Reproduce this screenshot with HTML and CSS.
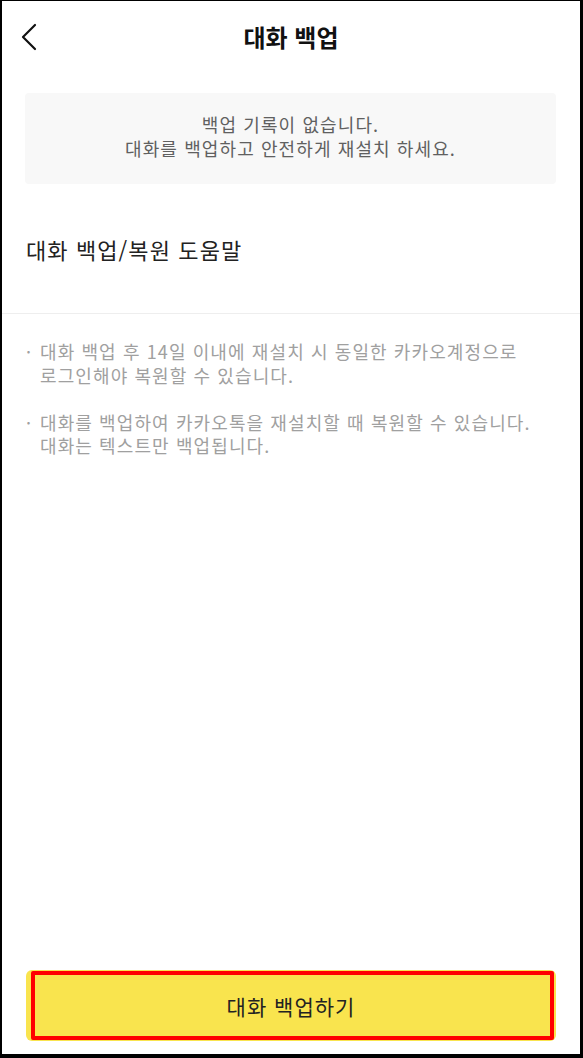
FILE: index.html
```html
<!DOCTYPE html>
<html lang="ko">
<head>
<meta charset="utf-8">
<title>대화 백업</title>
<link rel="stylesheet" href="styles.css">
</head>
<body>
<div class="frame">
  <header class="header">
    <button class="back" aria-label="뒤로">
      <svg width="18" height="28" viewBox="0 0 18 28"><path d="M15 2 L3 14 L15 26" fill="none" stroke="#111" stroke-width="2.2" stroke-linecap="round" stroke-linejoin="round"/></svg>
    </button>
    <h1 class="title">대화 백업</h1>
    <span></span>
  </header>
  <div class="notice">
    <p>백업 기록이 없습니다.</p>
    <p>대화를 백업하고 안전하게 재설치 하세요.</p>
  </div>
  <div class="help">대화 백업/복원 도움말</div>
  <ul class="tips">
    <li>대화 백업 후 14일 이내에 재설치 시 동일한 카카오계정으로<br>로그인해야 복원할 수 있습니다.</li>
    <li>대화를 백업하여 카카오톡을 재설치할 때 복원할 수 있습니다.<br>대화는 텍스트만 백업됩니다.</li>
  </ul>
  <div class="spacer"></div>
  <button class="cta">대화 백업하기<span class="mark"></span></button>
</div>
</body>
</html>
```
FILE: styles.css
```css
* { box-sizing: border-box; }
html, body { margin: 0; padding: 0; background: #fff; }
body {
  font-family: "Noto Sans CJK KR", "Noto Sans", sans-serif;
  color: #222;
}
.frame {
  height: 1058px;
  width: 583px;
  border-style: solid;
  border-color: #000;
  border-width: 1px 3px 4px 2px;
  display: flex;
  flex-direction: column;
}
.header {
  height: 72px;
  display: grid;
  grid-template-columns: 1fr auto 1fr;
  align-items: center;
}
.back {
  justify-self: start;
  margin-left: 18px;
  padding: 0;
  border: 0;
  background: none;
  width: 20px;
  height: 30px;
  display: flex;
  align-items: center;
}
.title {
  margin: 0;
  font-size: 24px;
  font-weight: 700;
  color: #111;
  line-height: 30px;
}
.notice {
  margin: 20px 24px 0 23px;
  height: 91px;
  padding-bottom: 5px;
  background: #f8f8f8;
  border-radius: 4px;
  display: flex;
  flex-direction: column;
  justify-content: center;
  align-items: center;
  color: #606060;
  font-size: 18px;
  line-height: 24px;
  letter-spacing: 1.1px;
}
.notice p { margin: 0; }
.help {
  height: 130px;
  display: flex;
  align-items: center;
  padding-left: 24px;
  font-size: 22px;
  color: #222;
  letter-spacing: 1.1px;
  border-bottom: 1px solid #eeeeee;
}
.tips {
  list-style: none;
  margin: 0;
  padding: 26px 20px 0 24px;
  color: #a0a0a0;
  font-size: 18px;
  line-height: 23.5px;
  letter-spacing: 1.1px;
}
.tips li {
  position: relative;
  padding-left: 14px;
  margin-bottom: 23.5px;
  white-space: nowrap;
}
.tips li::before {
  content: "·";
  position: absolute;
  left: 0;
  top: 0;
}
.spacer { flex: 1; }
.cta {
  position: relative;
  margin: 0 24px 13px 24px;
  height: 71px;
  border: 0;
  border-radius: 6px;
  background: #f9e44e;
  font-family: inherit;
  font-size: 21px;
  color: #222;
  letter-spacing: 1px;
}
.mark {
  position: absolute;
  top: 1px;
  left: 5px;
  right: 2px;
  bottom: 1px;
  border: 4px solid #ff0000;
  border-radius: 2px;
}
```
